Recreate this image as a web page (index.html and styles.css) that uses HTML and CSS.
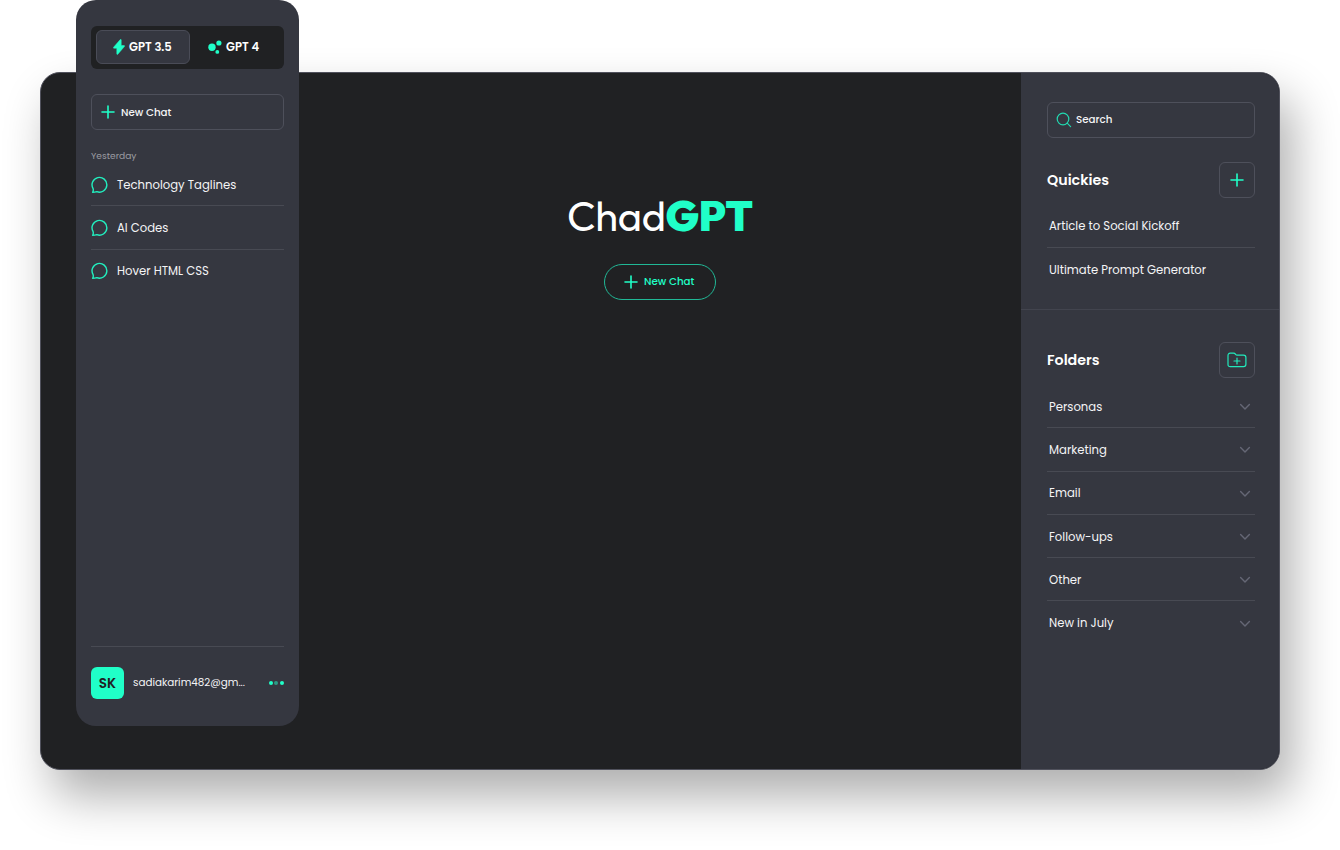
FILE: index.html
```
<!DOCTYPE html>
<html lang="en">
<head>
<meta charset="utf-8">
<title>ChadGPT</title>
<link rel="stylesheet" href="styles.css">
</head>
<body>
<svg width="0" height="0" class="defs">
  <symbol id="plus" viewBox="0 0 14 14"><path d="M7 1v12M1 7h12" fill="none" stroke="currentColor" stroke-width="1.6" stroke-linecap="round"/></symbol>
  <symbol id="chat" viewBox="0 0 18 18"><path d="M1.6 16.3C2.3 15.2 2.5 14 2.1 12.6A7.4 7.4 0 1 1 5.8 15.7C4.6 16.1 3.2 16.3 1.6 16.3Z" fill="none" stroke="currentColor" stroke-width="1.4" stroke-linejoin="round"/></symbol>
  <symbol id="chevron" viewBox="0 0 12 8"><path d="m1.6 1.6 4.4 4.4 4.4-4.4" fill="none" stroke="currentColor" stroke-width="1.4" stroke-linecap="round" stroke-linejoin="round"/></symbol>
</svg>
<div class="window">
  <aside class="sidebar">
    <div class="tabs">
      <div class="tab active"><svg class="bolt" viewBox="0 0 12 16"><path d="M7.3.5.6 8.2c-.5.6-.2 1 .5 1h2.7v5.6c0 .8.6.9 1 .4l6.6-7.6c.5-.6.2-1.1-.5-1.1H8.2V.9c0-.6-.5-.8-.9-.4Z" fill="currentColor" stroke="currentColor" stroke-width=".5"/></svg><span>GPT 3.5</span></div>
      <div class="tab"><svg class="dots4" viewBox="0 0 14 14"><circle cx="4" cy="7.3" r="3.7" fill="currentColor"/><circle cx="10.9" cy="3" r="2.6" fill="currentColor"/><circle cx="9.3" cy="11.9" r="1.9" fill="currentColor"/></svg><span>GPT 4</span></div>
    </div>
    <div class="new-chat"><svg class="plus"><use href="#plus"/></svg><span>New Chat</span></div>
    <div class="label">Yesterday</div>
    <div class="chats">
      <div class="chat"><svg class="bubble"><use href="#chat"/></svg><span>Technology Taglines</span></div>
      <div class="chat"><svg class="bubble"><use href="#chat"/></svg><span>AI Codes</span></div>
      <div class="chat"><svg class="bubble"><use href="#chat"/></svg><span>Hover HTML CSS</span></div>
    </div>
    <div class="account">
      <div class="avatar">SK</div>
      <span class="email">sadiakarim482@gm...</span>
      <div class="more"><i></i><i class="dim"></i><i></i></div>
    </div>
  </aside>
  <main class="main">
    <h1 class="logo"><span class="chad">Chad</span><span class="gpt">GPT</span></h1>
    <div class="start"><svg class="plus"><use href="#plus"/></svg><span>New Chat</span></div>
  </main>
  <aside class="panel">
    <section class="quick">
      <div class="search"><svg class="lens" viewBox="0 0 16 16"><circle cx="7" cy="7" r="5.8"/><path d="m11.2 11.2 3.4 3.4"/></svg><span>Search</span></div>
      <div class="head"><h2>Quickies</h2><div class="square"><svg class="plus"><use href="#plus"/></svg></div></div>
      <div class="rows">
        <div class="row"><span>Article to Social Kickoff</span></div>
        <div class="row"><span>Ultimate Prompt Generator</span></div>
      </div>
    </section>
    <section class="folders">
      <div class="head"><h2>Folders</h2><div class="square"><svg class="folder" viewBox="0 0 20 16"><path d="M1 12.5v-9C1 2 1.7 1.2 3.2 1.2h3.2c1.4 0 1.6.3 2.2 1.2.4.6.8.8 1.6.8h6.3c1.6 0 2.4.8 2.4 2.3v6.8c0 1.5-.8 2.3-2.3 2.3H3.3C1.8 14.6 1 13.9 1 12.5ZM10 6v6M7 9h6"/></svg></div></div>
      <div class="rows">
        <div class="row"><span>Personas</span><svg class="chev"><use href="#chevron"/></svg></div>
        <div class="row"><span>Marketing</span><svg class="chev"><use href="#chevron"/></svg></div>
        <div class="row"><span>Email</span><svg class="chev"><use href="#chevron"/></svg></div>
        <div class="row"><span>Follow-ups</span><svg class="chev"><use href="#chevron"/></svg></div>
        <div class="row"><span>Other</span><svg class="chev"><use href="#chevron"/></svg></div>
        <div class="row"><span>New in July</span><svg class="chev"><use href="#chevron"/></svg></div>
      </div>
    </section>
  </aside>
</div>
</body>
</html>
```
FILE: styles.css
```
* { box-sizing: border-box; }
body {
  margin: 0;
  height: 850px;
  padding: 72px 60px 0 40px;
  background: #fff;
  color: #f4f4f6;
  font-family: Poppins, Inter, sans-serif;
  font-size: 11.65px;
  line-height: 1;
  overflow: hidden;
}
svg { display: block; flex: none; }
.defs { position: absolute; }
span, h1, h2 { white-space: nowrap; }
h2 { margin: 0; font-size: 14.25px; font-weight: 600; color: #fff; }
.folders h2 { padding-bottom: 1px; }
.window {
  position: relative;
  display: grid;
  grid-template-columns: 1fr 258px;
  height: 698px;
  border: 1px solid #50515c;
  border-radius: 20px;
  background: #202123;
  box-shadow: 12px 26px 48px rgba(0, 0, 0, .32);
}
.sidebar {
  position: absolute;
  top: -73px;
  left: 35px;
  width: 223px;
  height: 726px;
  padding: 26px 15px 27px;
  display: flex;
  flex-direction: column;
  border-radius: 20px;
  background: #353740;
}
.tabs { display: flex; height: 43px; padding: 4px 5px; border-radius: 6px; background: #202123; }
.tab { display: flex; align-items: center; height: 34px; font-weight: 600; font-size: 11.6px; color: #fff; padding-left: 18px; }
.tab span { padding-top: 1px; }
.tab.active { width: 94px; padding-left: 16px; border: 1px solid #4a4c57; border-radius: 6px; background: #353740; }
.bolt { width: 12px; height: 16px; margin-right: 4px; color: #20ffc8; }
.dots4 { width: 14px; height: 14px; margin-right: 4px; color: #20ffc8; }
.new-chat, .search {
  display: flex;
  align-items: center;
  height: 36px;
  border: 1px solid #4e505b;
  border-radius: 6px;
  font-size: 10.3px;
  font-weight: 500;
}
.new-chat { margin-top: 25px; padding-left: 9px; }
.new-chat span, .search span { padding-top: 2px; }
.plus { width: 14px; height: 14px; color: #20ffc8; }
.new-chat .plus { margin-right: 6px; }
.label { margin-top: 20px; height: 13px; line-height: 12px; font-size: 9.1px; color: #9b9ca2; }
.chats { display: flex; flex-direction: column; }
.chat { display: flex; align-items: center; gap: 8px; height: 43.3px; padding-top: 1.4px; border-bottom: 1px solid #484a53; }
.chat span, .row span { padding-top: 1px; }
.chat:last-child { border-color: transparent; }
.bubble { width: 18px; height: 18px; color: #22efbf; }
.account { display: flex; align-items: center; margin-top: auto; padding-top: 20px; border-top: 1px solid #484a53; }
.avatar { display: grid; place-items: center; width: 33px; height: 32px; padding-top: 1px; border-radius: 6px; background: #20ffc8; color: #202123; font-size: 13.6px; font-weight: 600; }
.email { margin-left: 9px; font-size: 10.35px; }
.more { display: flex; gap: 1.6px; margin-left: auto; }
.more i { width: 4px; height: 4px; border-radius: 50%; background: #20ffc8; }
.more .dim { background: #2b9b85; }
.main { display: flex; flex-direction: column; align-items: center; padding: 120px 0 0 258px; }
.logo { display: flex; align-items: center; height: 46px; margin: 0; font-family: Outfit, Poppins, sans-serif; font-size: 41.6px; }
.chad { font-weight: 400; letter-spacing: -.3px; color: #fff; }
.gpt { font-weight: 900; color: #20ffc8; }
.start { display: flex; align-items: center; width: 112px; height: 36px; margin-top: 25px; padding-left: 19px; gap: 6px; border: 1px solid #20b896; border-radius: 18px; color: #20ffc8; font-size: 10.3px; font-weight: 500; }
.panel { border-radius: 0 19px 19px 0; background: #353740; }
.quick { height: 237px; padding: 28.5px 24px 0 26px; border-bottom: 1px solid #42444e; }
.search { padding-left: 8px; gap: 4px; }
.lens { width: 16px; height: 16px; fill: none; stroke: #22d9b0; stroke-width: 1.2; stroke-linecap: round; }
.head { display: flex; align-items: center; justify-content: space-between; }
.quick .head { margin-top: 24.5px; }
.square { display: grid; place-items: center; width: 36px; height: 36px; border: 1px solid #4e505b; border-radius: 6px; }
.folder { width: 20px; height: 16px; fill: none; stroke: #22e9bb; stroke-width: 1.2; stroke-linecap: round; stroke-linejoin: round; }
.rows { margin-top: 6.6px; }
.row { display: flex; align-items: center; justify-content: space-between; height: 43.3px; padding: 2px 4.5px 0 2px; border-bottom: 1px solid #484a53; }
.row:last-child { border-color: transparent; }
.folders { padding: 32.4px 24px 0 26px; }
.chev { width: 12px; height: 8px; color: #656775; }
```
